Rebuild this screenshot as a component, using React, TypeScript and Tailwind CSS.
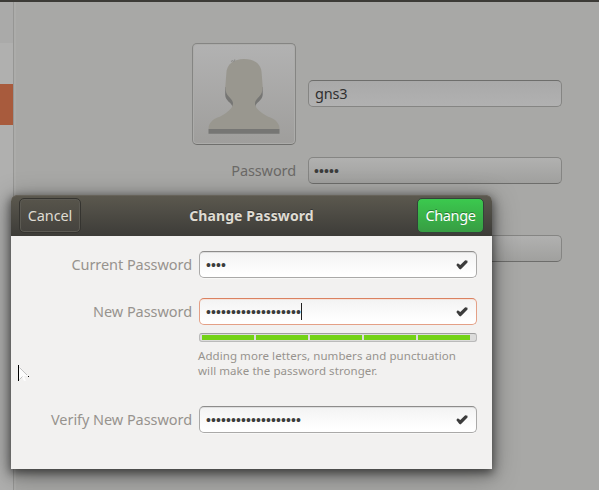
import React from 'react';

const textFont = "font-['Noto_Sans',sans-serif]";

function Dots({ count }: { count: number }) {
  return (
    <span className="font-['Liberation_Sans',sans-serif] text-[14px] leading-none tracking-[0.098px] text-[#3c3c3c]">
      {'•'.repeat(count)}
    </span>
  );
}

function Tick() {
  return (
    <svg width="12" height="10" viewBox="0 0 12 10" className="ml-auto" aria-hidden="true">
      <path d="M0.300 5 L1.800 3.300 L4.300 4.900 L9.200 0.300 L11.500 0.700 L11.500 2.600 L5.600 8.600 L4.300 9.400 L3.200 8.700 Z" fill="#3c3c3c" />
    </svg>
  );
}

function Field({ dots, active = false }: { dots: number; active?: boolean }) {
  return (
    <div
      className={`flex h-[27px] w-[278px] items-center rounded-[5px] border bg-linear-to-b from-[#f3f3f3] to-white to-90% pr-[8px] pl-[6px] ${
        active
          ? 'border-[#e4a086] border-t-[#db8160] shadow-[inset_0_1px_0_#f6e4dc]'
          : 'border-[#aaa9a8] border-t-[#8d8c8b] shadow-[inset_0_1px_0_#dedede,0_1px_0_#f8f8f7]'
      }`}
    >
      <Dots count={dots} />
      {active && <span className="h-[17px] w-px bg-[#222]" />}
      <Tick />
    </div>
  );
}

function Label({ children }: { children: string }) {
  return (
    <div className="flex w-[181px] justify-end">
      <span className="text-[14.5px] leading-[27px] tracking-[-0.06px] whitespace-nowrap text-[#97938e]">{children}</span>
    </div>
  );
}

function Avatar() {
  return (
    <div className="h-[102px] w-[104px] rounded-[5px] border border-[#858583] border-b-[#6f6f6d] bg-linear-to-b from-[#b2b2b2] to-[#9f9e9c] shadow-[inset_0_0_0_1px_#acacaa]">
      <svg width="102" height="100" viewBox="0 0 102 100" aria-hidden="true">
        <path
          d="M32.200 43 V51 C32.500 57 38 58 39.700 63 H62.300 C63 58 69 57 69.700 51 V43Z M15.500 85 H86.500 V89.800 H15.500Z"
          fill="#767674"
        />
        <path
          d="M33.300 30 C33.300 20 41 15 51 15 C61 15 68.700 20 68.700 30 L69.700 43 C69.700 53 63 53 62 59 C62 63 65 66 69 69 C74 73 78 73 82 76 C85 79 86.500 81 86.500 85 H15.500 C15.500 81 17 78.500 20 76 C24 73 28 73 33 69 C37 66 40 63 40 59 C39 53 32.300 53 32.300 43Z"
          fill="#99978f"
        />
        <path d="M38 17.500 L40 16.500 M40.500 18 L42 15.500" stroke="#8e8e8b" strokeWidth="1.200" />
      </svg>
    </div>
  );
}

const dimField =
  'flex h-[27px] w-[254px] items-center rounded-[5px] border border-[#858583]';

function Background() {
  return (
    <div className="flex h-[488px]">
      <div className="w-[13px] bg-[#b0b0af]">
        <div className="h-[41px] bg-[#aaaaa9]" />
        <div className="h-[41px]" />
        <div className="h-[41px] bg-[#a85b3d]" />
      </div>
      <div className="w-[3px] border-l border-[#969694] bg-[#acacaa]" />
      <div className="flex-1 bg-[#a8a8a6] pt-[41px]">
        <div className="flex h-[102px] items-center gap-3 pl-[176px]">
          <Avatar />
          <div className={`${dimField} mb-px border-t-[#6e6e6c] bg-linear-to-b from-[#a9a9a9] to-[#b1b1b1] pt-px pl-[6px] text-[14.5px] tracking-[-0.2px] text-[#303030]`}>
            gns3
          </div>
        </div>
        <div className="mt-3 flex items-center gap-3">
          <span className="w-[280px] text-right text-[14.5px] leading-[27px] tracking-[-0.1px] text-[#6b6966]">Password</span>
          <div className={`${dimField} border-b-[#6d6d6b] bg-linear-to-b from-[#b1b1b0] to-[#a0a09e] pl-[5px]`}>
            <Dots count={5} />
          </div>
        </div>
        <div className="mt-[51px] flex pl-[292px]">
          <div className={`${dimField} border-b-[#6d6d6b] bg-linear-to-b from-[#b1b1b0] to-[#a0a09e]`} />
        </div>
      </div>
    </div>
  );
}

function Strength() {
  return (
    <div className="flex h-[9px] w-[278px] gap-[2px] rounded-[3px] border border-[#bababa] border-t-[#9e9e9e] bg-[#dcdcdb] px-[2px] py-px">
      {[0, 1, 2, 3, 4].map((i) => (
        <span key={i} className="h-[5px] w-[52px] bg-[#73d216]" />
      ))}
    </div>
  );
}

function Pointer() {
  return (
    <svg width="13" height="18" viewBox="0 0 13 18" className="absolute top-[170px] left-[7px]" aria-hidden="true">
      <path d="M1 1 L10 11 L6 11 L8 16 L6 16 L4 12 L1 15Z" fill="#fcfcfc" />
      <path d="M1.500 2.500 L9 10 M1.500 14.500 L4.500 11.500" stroke="#b4b4b4" strokeWidth="0.800" fill="none" />
      <path d="M0 0H1V16H0Z M10 11H11V12H10Z" fill="#000" />
    </svg>
  );
}

function Dialog() {
  return (
    <div className="absolute top-[195px] left-[11px] h-[274px] w-[481px] rounded-t-[6px] bg-[#f2f1f0] shadow-[0_3px_10px_1px_rgba(0,0,0,0.5),0_5px_24px_2px_rgba(0,0,0,0.35)]">
      <div className="flex h-[41px] items-center justify-between rounded-t-[6px] bg-linear-to-b from-[#5c594f] to-[#3d3c38] px-2 shadow-[inset_0_1px_0_#67635a]">
        <div className="h-[35px] w-[62px] rounded-[5px] border border-[#353430] bg-linear-to-b from-[#57544b] to-[#45433e] text-center text-[14.5px] leading-[32px] tracking-[-0.1px] text-[#dfdbd2] shadow-[inset_0_0_0_1px_#5c5a53]">
          Cancel
        </div>
        <div className="ml-[5px] text-[14px] font-bold tracking-[0.1px] text-[#dfdbd2] [text-shadow:0_-1px_0_#333]">Change Password</div>
        <div className="h-[35px] w-[67px] rounded-[5px] border border-[#34423a] bg-linear-to-b from-[#3bc94e] to-[#379d43] text-center text-[14.5px] leading-[32px] tracking-[-0.4px] text-white [text-shadow:0_-1px_0_#267e32]">
          Change
        </div>
      </div>
      <div className="pt-[15px]">
        <div className="flex gap-[7px]">
          <Label>Current Password</Label>
          <Field dots={4} />
        </div>
        <div className="mt-5 flex gap-[7px]">
          <Label>New Password</Label>
          <Field dots={19} active />
        </div>
        <div className="mt-2 pl-[188px]">
          <Strength />
        </div>
        <p className="mt-[7px] h-[31px] pl-[187px] text-[11.5px] leading-[14.5px] tracking-[0.065px] text-[#97938e]">
          Adding more letters, numbers and punctuation
          <br />
          will make the password stronger.
        </p>
        <div className="mt-[26px] flex gap-[7px]">
          <Label>Verify New Password</Label>
          <Field dots={19} />
        </div>
      </div>
      <Pointer />
    </div>
  );
}

export default function App() {
  return (
    <main className={`relative h-[490px] w-[599px] overflow-hidden border-t-2 border-[#3c3b37] bg-[#a8a8a6] ${textFont}`}>
      <Background />
      <div className="absolute -top-[2px] left-0">
        <Dialog />
      </div>
    </main>
  );
}
